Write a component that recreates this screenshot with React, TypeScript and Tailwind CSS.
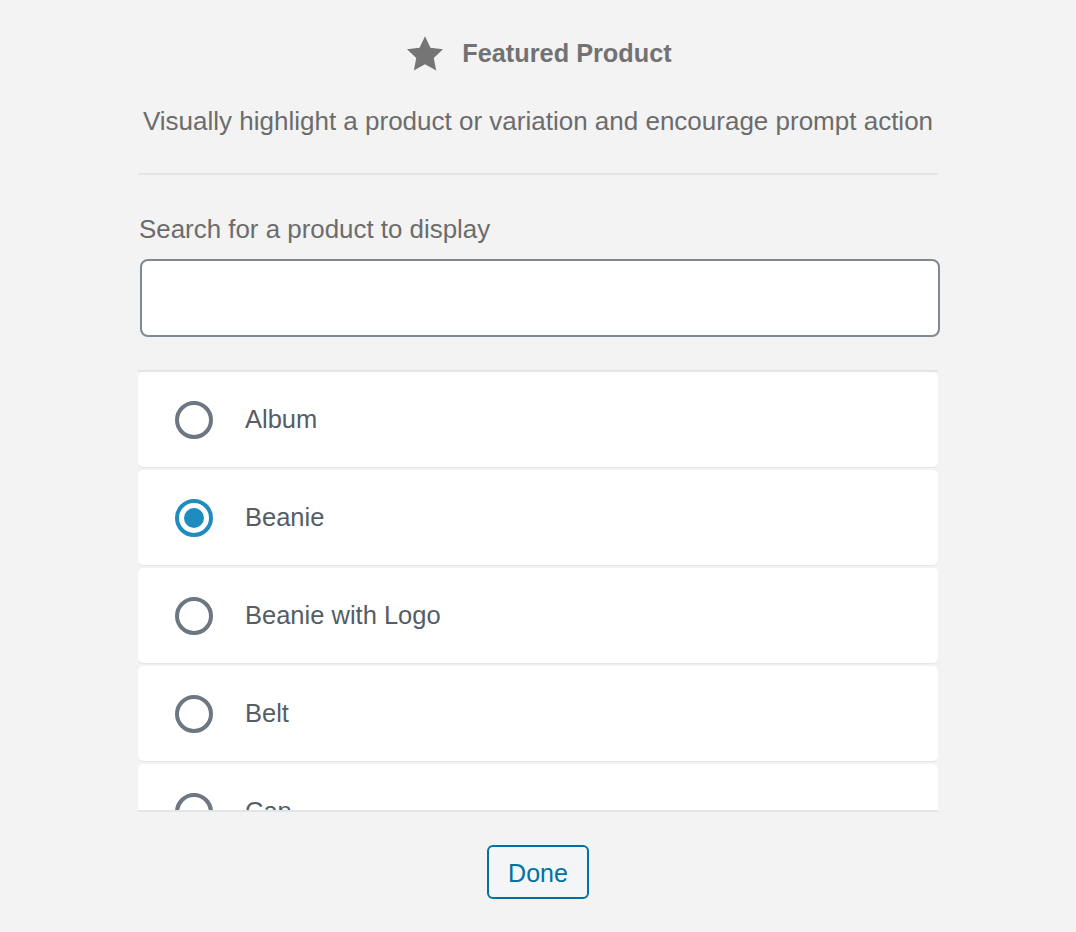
import React, { useState } from "react";

const products = ["Album", "Beanie", "Beanie with Logo", "Belt", "Cap"];

function Star() {
  return (
    <svg width="42" height="42" viewBox="0 0 24 24" className="text-[#757575]" fill="currentColor">
      <path d="M12 1.8l3.1 6.6 7.2.9-5.3 5 1.4 7.1L12 17.9l-6.4 3.5L7 14.3 1.7 9.3l7.2-.9z" />
    </svg>
  );
}

function Radio({ checked }: { checked: boolean }) {
  if (checked) {
    return (
      <span className="flex h-[38px] w-[38px] shrink-0 items-center justify-center rounded-full border-[4px] border-[#1e8cbe]">
        <span className="h-[20px] w-[20px] rounded-full bg-[#1e8cbe]" />
      </span>
    );
  }
  return <span className="h-[38px] w-[38px] shrink-0 rounded-full border-[4px] border-[#6c7781]" />;
}

export default function App() {
  const [selected, setSelected] = useState("Beanie");

  return (
    <div className="min-h-[932px] bg-[#f3f3f3] pt-[36px] font-['Liberation_Sans',Arial,sans-serif]">
      <div className="mx-auto w-[800px]">
        <div className="flex h-[36px] items-center justify-center gap-[16px]">
          <Star />
          <span className="text-[25.3px] font-bold text-[#727272]">Featured Product</span>
        </div>

        <p className="mt-[31px] text-center text-[26px] leading-[36px] text-[#6c6c6c]">
          Visually highlight a product or variation and encourage prompt action
        </p>

        <hr className="mt-[34px] border-t-2 border-[#e2e4e7]" />

        <label className="mt-[36px] block pl-[1px] text-[25.9px] leading-[36px] text-[#6c6c6c]">
          Search for a product to display
        </label>
        <input
          type="text"
          className="ml-[2px] mt-[12px] block h-[78px] w-[800px] rounded-[8px] border-2 border-[#7e8993] bg-white px-4 text-[24px] outline-none"
        />

        <div className="mt-[33px] h-[442px] overflow-hidden border-y-2 border-[#e2e4e7]">
          <div className="flex flex-col gap-[3px]">
            {products.map((name) => (
              <button
                key={name}
                onClick={() => setSelected(name)}
                className="flex h-[95px] shrink-0 items-center gap-[32px] rounded-[5px] bg-white pl-[37px] text-left shadow-[0_1px_1px_#e2e4e7]"
              >
                <Radio checked={selected === name} />
                <span className="text-[25.5px] text-[#555d66]">{name}</span>
              </button>
            ))}
          </div>
        </div>

        <div className="mt-[33px] flex justify-center">
          <button className="h-[54px] w-[102px] rounded-[6px] border-2 border-[#0071a1] bg-[#f3f5f6] pt-[3px] text-[25px] text-[#0071a1]">
            Done
          </button>
        </div>
      </div>
    </div>
  );
}
